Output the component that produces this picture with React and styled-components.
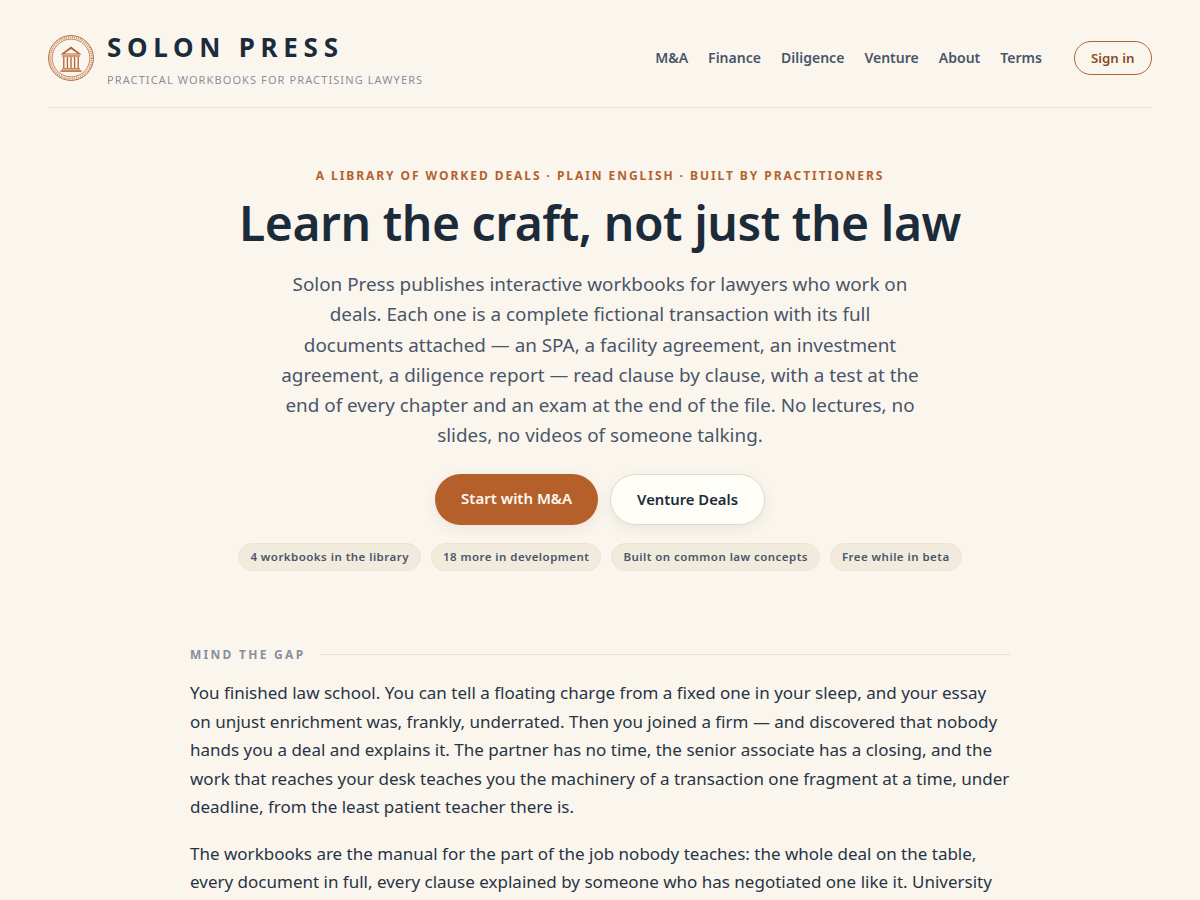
import React from 'react';
import styled, { createGlobalStyle } from 'styled-components';

const GlobalStyle = createGlobalStyle`
  html, body {
    margin: 0;
    padding: 0;
    background: #faf6ee;
  }
  body {
    font-family: "Noto Sans", sans-serif;
    color: #1c2b3a;
  }
`;

const NAV_LINKS = ['M&A', 'Finance', 'Diligence', 'Venture', 'About', 'Terms'];
const PILLS = [
  '4 workbooks in the library',
  '18 more in development',
  'Built on common law concepts',
  'Free while in beta',
];

function Logo() {
  return (
    <svg width="46" height="46" viewBox="0 0 46 46" fill="none">
      <circle cx="23" cy="23" r="22.4" stroke="#b5622f" strokeWidth="1" />
      <circle cx="23" cy="23" r="20.7" stroke="#b5622f" strokeWidth="1.6" strokeDasharray="1 1" opacity="0.75" />
      <circle cx="23" cy="23" r="18.9" stroke="#b5622f" strokeWidth="0.8" />
      <path d="M23 11.5 L33.5 19.5 H12.5 Z M23 13.9 L29.6 18.5 H16.4 Z" fill="#b5622f" fillRule="evenodd" />
      <rect x="14" y="20.4" width="18" height="1.2" fill="#b5622f" />
      <path d="M15.8 22v11M19.4 22v11M23 22v11M26.6 22v11M30.2 22v11" stroke="#b5622f" strokeWidth="1.3" />
      <rect x="14" y="33.3" width="18" height="1.2" fill="#b5622f" />
      <rect x="12.5" y="35.3" width="21" height="1.5" fill="#b5622f" />
    </svg>
  );
}

export default function App() {
  return (
    <>
      <GlobalStyle />
      <Page>
        <Header>
          <Brand>
            <Logo />
            <BrandText>
              <BrandName>SOLON PRESS</BrandName>
              <Tagline>Practical workbooks for practising lawyers</Tagline>
            </BrandText>
          </Brand>
          <Nav>
            {NAV_LINKS.map((link) => (
              <NavLink href="#" key={link}>{link}</NavLink>
            ))}
            <SignIn href="#">Sign in</SignIn>
          </Nav>
        </Header>

        <Hero>
          <Eyebrow>A library of worked deals · Plain English · Built by practitioners</Eyebrow>
          <Title>Learn the craft, not just the law</Title>
          <Lede>
            Solon Press publishes interactive workbooks for lawyers who work on deals. Each one is
            a complete fictional transaction with its full documents attached — an SPA, a facility
            agreement, an investment agreement, a diligence report — read clause by clause, with a
            test at the end of every chapter and an exam at the end of the file. No lectures, no
            slides, no videos of someone talking.
          </Lede>
          <Actions>
            <Button href="#" $primary>Start with M&amp;A</Button>
            <Button href="#">Venture Deals</Button>
          </Actions>
          <Pills>
            {PILLS.map((pill) => (
              <Pill key={pill}>{pill}</Pill>
            ))}
          </Pills>
        </Hero>

        <Section>
          <SectionHead>
            <SectionLabel>Mind the gap</SectionLabel>
            <Rule />
          </SectionHead>
          <Para>
            You finished law school. You can tell a floating charge from a fixed one in your sleep,
            and your essay on unjust enrichment was, frankly, underrated. Then you joined a firm —
            and discovered that nobody hands you a deal and explains it. The partner has no time,
            the senior associate has a closing, and the work that reaches your desk teaches you the
            machinery of a transaction one fragment at a time, under deadline, from the least
            patient teacher there is.
          </Para>
          <Para>
            The workbooks are the manual for the part of the job nobody teaches: the whole deal on
            the table, every document in full, every clause explained by someone who has negotiated
            one like it. University taught you the law. This teaches you the work.
          </Para>
        </Section>
      </Page>
    </>
  );
}

const Page = styled.div`
  max-width: 1104px;
  margin: 0 auto;
  padding: 0 48px;
`;

const Header = styled.header`
  display: flex;
  align-items: center;
  justify-content: space-between;
  box-sizing: border-box;
  height: 108px;
  padding-top: 8px;
  border-bottom: 1px solid #ebe6da;
`;

const Brand = styled.div`
  display: flex;
  align-items: center;
  gap: 13px;
`;

const BrandText = styled.div`
  display: flex;
  flex-direction: column;
  gap: 7px;
`;

const BrandName = styled.div`
  font-size: 26px;
  line-height: 36px;
  font-weight: 700;
  letter-spacing: 0.22em;
  color: #1c2b3a;
`;

const Tagline = styled.div`
  font-size: 11px;
  line-height: 15px;
  letter-spacing: 0.1em;
  text-transform: uppercase;
  color: #8a8f9c;
`;

const Nav = styled.nav`
  display: flex;
  align-items: center;
  gap: 20px;
`;

const NavLink = styled.a`
  font-size: 14.04px;
  font-weight: 600;
  color: #4a5568;
  text-decoration: none;
`;

const SignIn = styled.a`
  margin-left: 11.5px;
  padding: 7px 16.5px;
  font-size: 13.28px;
  line-height: 18px;
  font-weight: 600;
  color: #8a4b24;
  text-decoration: none;
  border: 1px solid #b5622f;
  border-radius: 999px;
`;

const Hero = styled.section`
  display: flex;
  flex-direction: column;
  align-items: center;
  padding-top: 60px;
  text-align: center;
`;

const Eyebrow = styled.div`
  font-size: 12.04px;
  line-height: 16px;
  font-weight: 700;
  letter-spacing: 0.16em;
  text-transform: uppercase;
  color: #b5622f;
`;

const Title = styled.h1`
  margin: 9px 0 0;
  font-size: 48px;
  line-height: 60px;
  font-weight: 600;
  letter-spacing: -0.44px;
  color: #1c2b3a;
`;

const Lede = styled.p`
  width: 640px;
  margin: 16.3px 0 0;
  font-size: 18.88px;
  line-height: 1.6;
  color: #4a5568;
`;

const Actions = styled.div`
  display: flex;
  gap: 12px;
  margin-top: 23.7px;
`;

const Button = styled.a`
  display: flex;
  align-items: center;
  box-sizing: border-box;
  height: 51px;
  padding: ${(p) => (p.$primary ? '0 26px 3px' : '0 26px 2px')};
  font-size: ${(p) => (p.$primary ? '15px' : '14.8px')};
  font-weight: 600;
  text-decoration: none;
  border-radius: 999px;
  color: ${(p) => (p.$primary ? '#fdf8f0' : '#1c2b3a')};
  background: ${(p) => (p.$primary ? '#b5602b' : '#fffdf8')};
  border: ${(p) => (p.$primary ? 'none' : '1px solid #e0dacb')};
  box-shadow: 0 4px 14px rgb(60 40 20 / 8%);
`;

const Pills = styled.div`
  display: flex;
  gap: 10px;
  margin-top: 18px;
`;

const Pill = styled.span`
  padding: 5px 11px;
  font-size: 11.5px;
  line-height: 16px;
  font-weight: 600;
  letter-spacing: 0.04em;
  color: #4a5568;
  background: #f1ebdd;
  border: 1px solid #ece5d6;
  border-radius: 999px;
`;

const Section = styled.section`
  width: 820px;
  margin: 76px auto 0;
`;

const SectionHead = styled.div`
  display: flex;
  align-items: center;
  gap: 15px;
  margin-bottom: 16px;
`;

const SectionLabel = styled.h2`
  margin: 0;
  font-size: 12px;
  line-height: 16px;
  font-weight: 700;
  letter-spacing: 0.19em;
  text-transform: uppercase;
  color: #8a8f9c;
`;

const Rule = styled.div`
  flex: 1;
  height: 1px;
  margin-bottom: 1px;
  background: #e6e0d2;
`;

const Para = styled.p`
  margin: 0 0 18px;
  font-size: 17px;
  line-height: 28.56px;
  color: #283444;
`;
